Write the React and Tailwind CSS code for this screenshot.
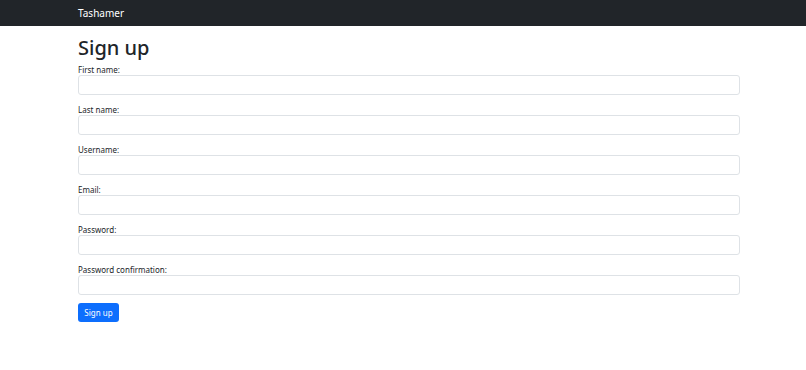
import React from "react";

const fields = [
  "First name:",
  "Last name:",
  "Username:",
  "Email:",
  "Password:",
  "Password confirmation:",
];

export default function App() {
  return (
    <div className="min-h-screen bg-white font-['Noto_Sans',sans-serif] text-[#212529]">
      <nav className="h-[26px] bg-[#212529] flex items-center">
        <div className="pl-[78px] text-[10px] text-white leading-none">Tashamer</div>
      </nav>
      <div className="pl-[78px] w-[740px]">
        <h1 className="text-[20px] font-medium leading-none mt-[12px] mb-[6px]">Sign up</h1>
        <form className="flex flex-col">
          {fields.map((label, i) => (
            <div
              key={label}
              className={i === fields.length - 1 ? "flex flex-col mb-[8px]" : "flex flex-col mb-[9px]"}
            >
              <label className="text-[8px] leading-[11px] h-[11px]">{label}</label>
              <input
                type="text"
                className="h-[20px] w-full rounded-[3px] border border-[#dee2e6] bg-white"
              />
            </div>
          ))}
          <div className="flex">
            <button
              type="button"
              className="h-[19px] w-[41px] rounded-[3px] bg-[#0d6efd] text-white text-[8px] leading-none"
            >
              Sign up
            </button>
          </div>
        </form>
      </div>
    </div>
  );
}
